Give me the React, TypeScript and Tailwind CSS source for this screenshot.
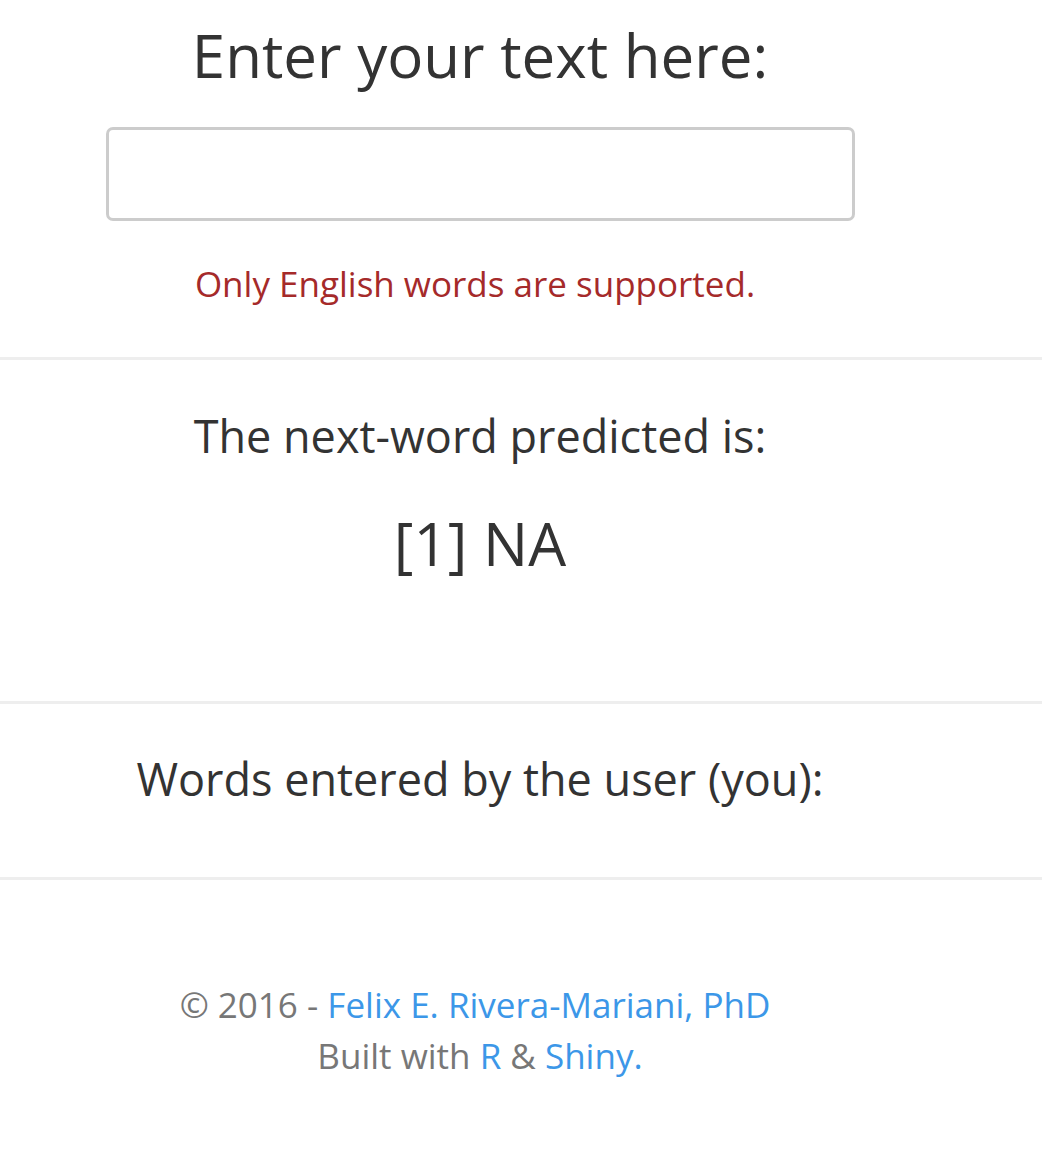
import React from 'react';

export default function App() {
  return (
    <div className="min-h-[1170px] bg-white text-[#333] font-['Open_Sans',sans-serif]">
      <div className="w-[960px] text-center">
        <h1 className="pt-[19px] text-[60px] leading-[72px]">Enter your text here:</h1>
        <div className="mt-[36px] flex justify-center">
          <input
            type="text"
            className="w-[749px] h-[94px] rounded-[7px] border-[3px] border-[#ccc] outline-none px-4 text-[30px]"
          />
        </div>
        <p className="mt-[40px] pr-[10px] text-[35px] leading-[46px] text-[#a52a2a]">
          Only English words are supported.
        </p>
      </div>
      <hr className="mt-[50px] border-t-[3px] border-[#eee]" />
      <div className="w-[960px] text-center">
        <h3 className="mt-[48px] text-[45px] leading-[56px]">The next-word predicted is:</h3>
        <div className="mt-[44px] text-[60px] leading-[70px]">[1] NA</div>
      </div>
      <hr className="mt-[123px] border-t-[3px] border-[#eee]" />
      <div className="w-[960px] text-center">
        <h3 className="mt-[47px] text-[45px] leading-[56px]">Words entered by the user (you):</h3>
      </div>
      <hr className="mt-[70px] border-t-[3px] border-[#eee]" />
      <footer className="w-[960px] text-center mt-[99px] text-[35px] leading-[51px] text-[#777]">
        <div className="pr-[10px]">
          © 2016 - <a className="text-[#3c97e8]">Felix E. Rivera-Mariani, PhD</a>
        </div>
        <div>
          Built with <a className="text-[#3c97e8]">R</a> &amp; <a className="text-[#3c97e8]">Shiny.</a>
        </div>
      </footer>
    </div>
  );
}
